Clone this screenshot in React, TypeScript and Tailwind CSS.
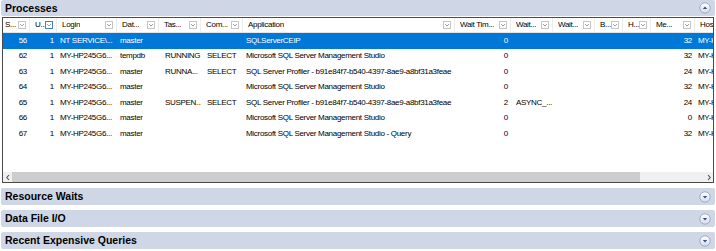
import React from 'react';

type Col = { key: string; label: string; w: number; right?: boolean; pl?: number; active?: boolean };

const cols: Col[] = [
  { key: 'spid', label: 'S...', w: 27, right: true },
  { key: 'up', label: 'U...', w: 27, right: true, active: true },
  { key: 'login', label: 'Login', w: 60, pl: 3 },
  { key: 'db', label: 'Dat...', w: 42, pl: 3 },
  { key: 'task', label: 'Tas...', w: 42, pl: 6 },
  { key: 'cmd', label: 'Com...', w: 42, pl: 6 },
  { key: 'app', label: 'Application', w: 212, pl: 3 },
  { key: 'wt', label: 'Wait Tim...', w: 56, right: true },
  { key: 'wtype', label: 'Wait...', w: 42, pl: 5 },
  { key: 'wres', label: 'Wait...', w: 42, pl: 3 },
  { key: 'blk', label: 'B...', w: 28, pl: 3 },
  { key: 'head', label: 'H...', w: 28, pl: 3 },
  { key: 'mem', label: 'Me...', w: 44, right: true },
  { key: 'host', label: 'Hos', w: 60, pl: 3 },
];

const profiler = 'SQL Server Profiler - b91e84f7-b540-4397-8ae9-a8bf31a3feae';
const ssms = 'Microsoft SQL Server Management Studio';

const rows: Record<string, string>[] = [
  { spid: '56', up: '1', login: 'NT SERVICE\\...', db: 'master', app: 'SQLServerCEIP', wt: '0', mem: '32', host: 'MY-HP245G6...' },
  { spid: '62', up: '1', login: 'MY-HP245G6...', db: 'tempdb', task: 'RUNNING', cmd: 'SELECT', app: ssms, wt: '0', mem: '32', host: 'MY-HP245G6...' },
  { spid: '63', up: '1', login: 'MY-HP245G6...', db: 'master', task: 'RUNNA...', cmd: 'SELECT', app: profiler, wt: '0', mem: '24', host: 'MY-HP245G6...' },
  { spid: '64', up: '1', login: 'MY-HP245G6...', db: 'master', app: ssms, wt: '0', mem: '32', host: 'MY-HP245G6...' },
  { spid: '65', up: '1', login: 'MY-HP245G6...', db: 'master', task: 'SUSPEN...', cmd: 'SELECT', app: profiler, wt: '2', wtype: 'ASYNC_...', mem: '24', host: 'MY-HP245G6...' },
  { spid: '66', up: '1', login: 'MY-HP245G6...', db: 'master', app: ssms, wt: '0', mem: '0', host: 'MY-HP245G6...' },
  { spid: '67', up: '1', login: 'MY-HP245G6...', db: 'master', app: ssms + ' - Query', wt: '0', mem: '32', host: 'MY-HP245G6...' },
];

function Toggle({ open }: { open?: boolean }) {
  return (
    <svg width="12" height="12" viewBox="0 0 12 12">
      <defs>
        <linearGradient id={open ? 'tgo' : 'tgc'} x1="0" y1="0" x2="0" y2="1">
          <stop offset="0" stopColor="#ffffff" />
          <stop offset="1" stopColor="#d3dbe8" />
        </linearGradient>
      </defs>
      <circle cx="6" cy="6" r="5.2" fill={`url(#${open ? 'tgo' : 'tgc'})`} stroke="#98a6bd" strokeWidth="0.9" />
      {open ? (
        <path d="M3.8 7 L6 4.6 L8.2 7 Z" fill="#34527f" />
      ) : (
        <path d="M3.8 5 L6 7.4 L8.2 5 Z" fill="#34527f" />
      )}
    </svg>
  );
}

function SectionBar({ title, open }: { title: string; open?: boolean }) {
  return (
    <div className="flex items-center justify-between bg-[#cfd7e6] rounded-[2px] mx-[1px] pl-[4px] pr-[4px] h-full">
      <span className="text-[10.5px] font-bold text-black leading-none">{title}</span>
      <Toggle open={open} />
    </div>
  );
}

function FilterIcon({ active }: { active?: boolean }) {
  return (
    <span
      className={`flex items-center justify-center w-[8px] h-[8px] shrink-0 bg-white border ${
        active ? 'border-[#3d7fd6]' : 'border-[#c6c6c6]'
      }`}
    >
      <svg width="6" height="6" viewBox="0 0 6 6">
        <path d="M1 2 L3 4 L5 2" fill="none" stroke="#8a8a8a" strokeWidth="0.8" />
      </svg>
    </span>
  );
}

export default function App() {
  return (
    <div className="w-[716px] h-[251px] overflow-hidden bg-white flex flex-col text-black" style={{ fontFamily: '"Liberation Sans", Arial, sans-serif' }}>
      <div className="h-[16px] shrink-0">
        <SectionBar title="Processes" open />
      </div>

      <div className="mt-[1px] mx-[2px] h-[166px] shrink-0 border border-[#4a4a4a] flex flex-col overflow-hidden">
        <div className="flex h-[15px] shrink-0 border-b border-[#e6e6e6] text-[8px] tracking-[-0.3px]">
          {cols.map((c, i) => (
            <div
              key={c.key}
              style={{ width: c.w }}
              className={`flex items-center justify-between shrink-0 pr-[3px] border-r border-[#ededed] ${i === 0 ? 'pl-[2px]' : 'pl-[5px]'}`}
            >
              <span className="whitespace-nowrap overflow-hidden">{c.label}</span>
              {c.key !== 'host' && <FilterIcon active={c.active} />}
            </div>
          ))}
        </div>

        {rows.map((r, ri) => (
          <div
            key={r.spid}
            className={`flex h-[15.5px] shrink-0 items-center text-[8px] tracking-[-0.3px] ${
              ri === 0 ? 'bg-[#0078d7] text-white' : ''
            }`}
          >
            {cols.map((c) => (
              <div
                key={c.key}
                style={{ width: c.w, paddingLeft: c.right ? 0 : c.pl ?? 3 }}
                className={`shrink-0 whitespace-nowrap overflow-hidden ${c.right ? 'text-right pr-[3px]' : ''}`}
              >
                {r[c.key] ?? ''}
              </div>
            ))}
          </div>
        ))}

        <div className="flex-1" />

        <div className="flex h-[10px] shrink-0 bg-[#f0f0f0] items-center">
          <span className="w-[9px] flex items-center justify-center text-[#555]">
            <svg width="6" height="7" viewBox="0 0 6 7">
              <path d="M4 1 L1.8 3.5 L4 6" fill="none" stroke="#505050" strokeWidth="1.1" />
            </svg>
          </span>
          <div className="h-[10px] w-[628px] bg-[#cdcdcd]" />
          <div className="flex-1" />
          <span className="w-[9px] flex items-center justify-center">
            <svg width="6" height="7" viewBox="0 0 6 7">
              <path d="M2 1 L4.2 3.5 L2 6" fill="none" stroke="#505050" strokeWidth="1.1" />
            </svg>
          </span>
        </div>
      </div>

      <div className="mt-[5px] flex flex-col gap-[5px]">
        <div className="h-[17px]">
          <SectionBar title="Resource Waits" />
        </div>
        <div className="h-[17px]">
          <SectionBar title="Data File I/O" />
        </div>
        <div className="h-[17px]">
          <SectionBar title="Recent Expensive Queries" />
        </div>
      </div>
    </div>
  );
}
